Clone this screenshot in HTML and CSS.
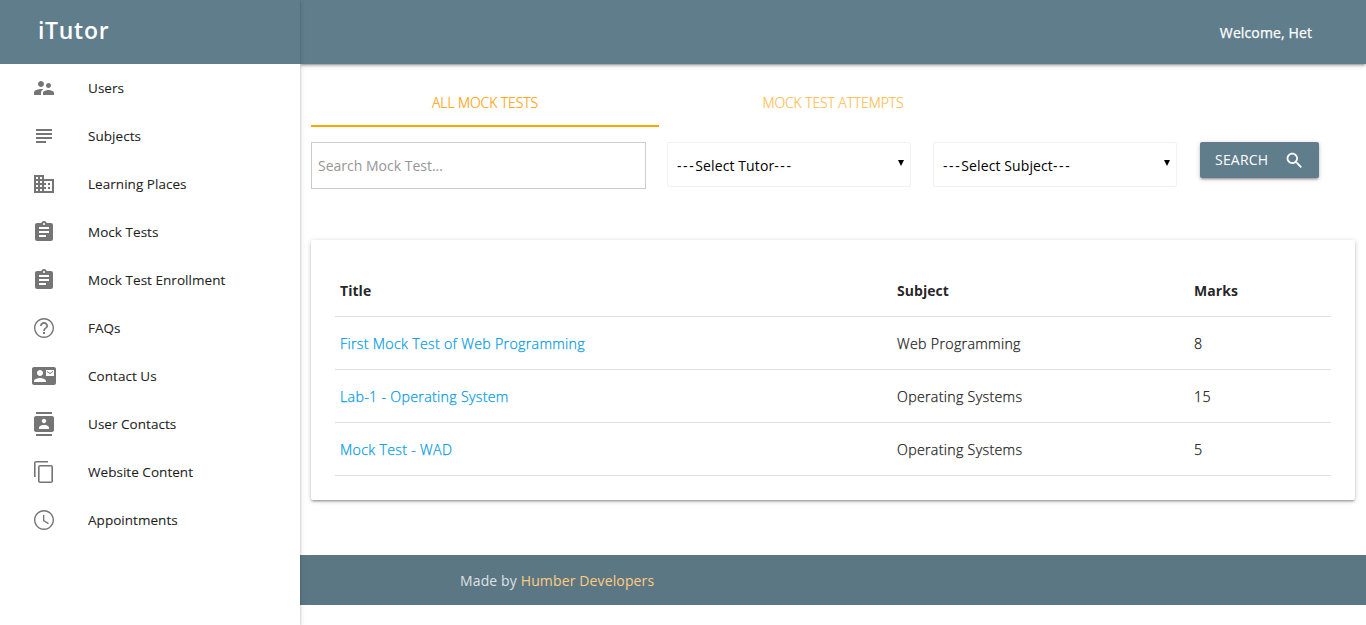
FILE: index.html
```html
<!DOCTYPE html>
<html lang="en">
<head>
<meta charset="utf-8">
<title>iTutor</title>
<link rel="stylesheet" href="styles.css">
</head>
<body>
<div class="app">
  <aside class="sidebar">
    <div class="brand"><span class="brand-name">iTutor</span></div>
    <nav class="menu">
      <a class="menu-item"><svg class="icon" viewBox="0 0 24 24"><path d="M16.5 12c1.38 0 2.49-1.12 2.49-2.5S17.880 7 16.500 7C15.120 7 14 8.120 14 9.500s1.120 2.500 2.500 2.500zM9 11c1.660 0 2.990-1.340 2.990-3S10.660 5 9 5C7.340 5 6 6.340 6 8s1.340 3 3 3zm7.500 3c-1.830 0-5.500.92-5.500 2.750V19h11v-2.250c0-1.830-3.670-2.750-5.500-2.750zM9 13c-2.330 0-7 1.170-7 3.500V19h7v-2.250c0-.85.33-2.340 2.370-3.470C10.500 13.100 9.660 13 9 13z"/></svg><span>Users</span></a>
      <a class="menu-item"><svg class="icon" viewBox="0 0 24 24"><path d="M14 17H4v2h10v-2zm6-8H4v2h16V9zM4 15h16v-2H4v2zM4 5v2h16V5H4z"/></svg><span>Subjects</span></a>
      <a class="menu-item"><svg class="icon" viewBox="0 0 24 24"><path d="M12 7V3H2v18h20V7H12zM6 19H4v-2h2v2zm0-4H4v-2h2v2zm0-4H4V9h2v2zm0-4H4V5h2v2zm4 12H8v-2h2v2zm0-4H8v-2h2v2zm0-4H8V9h2v2zm0-4H8V5h2v2zm10 12h-8v-2h2v-2h-2v-2h2v-2h-2V9h8v10zm-2-8h-2v2h2v-2zm0 4h-2v2h2v-2z"/></svg><span>Learning Places</span></a>
      <a class="menu-item"><svg class="icon" viewBox="0 0 24 24"><path d="M19 3h-4.180C14.400 1.840 13.300 1 12 1c-1.300 0-2.400.84-2.820 2H5c-1.100 0-2 .9-2 2v14c0 1.100.9 2 2 2h14c1.100 0 2-.9 2-2V5c0-1.100-.9-2-2-2zm-7 0c.55 0 1 .45 1 1s-.45 1-1 1-1-.45-1-1 .45-1 1-1zm2 14H7v-2h7v2zm3-4H7v-2h10v2zm0-4H7V7h10v2z"/></svg><span>Mock Tests</span></a>
      <a class="menu-item"><svg class="icon" viewBox="0 0 24 24"><path d="M19 3h-4.180C14.400 1.840 13.300 1 12 1c-1.300 0-2.400.84-2.820 2H5c-1.100 0-2 .9-2 2v14c0 1.100.9 2 2 2h14c1.100 0 2-.9 2-2V5c0-1.100-.9-2-2-2zm-7 0c.55 0 1 .45 1 1s-.45 1-1 1-1-.45-1-1 .45-1 1-1zm2 14H7v-2h7v2zm3-4H7v-2h10v2zm0-4H7V7h10v2z"/></svg><span>Mock Test Enrollment</span></a>
      <a class="menu-item"><svg class="icon" viewBox="0 0 24 24"><path d="M11 18h2v-2h-2v2zm1-16C6.480 2 2 6.480 2 12s4.480 10 10 10 10-4.480 10-10S17.520 2 12 2zm0 18.600c-4.750 0-8.600-3.850-8.600-8.600S7.250 3.400 12 3.400s8.600 3.850 8.600 8.600-3.850 8.600-8.600 8.600zM12 6c-2.210 0-4 1.790-4 4h1.700c0-1.270 1.030-2.300 2.300-2.300s2.300 1.030 2.300 2.300c0 2-3.150 1.750-3.150 5h1.700c0-2.250 3.150-2.500 3.150-5 0-2.210-1.790-4-4-4z"/></svg><span>FAQs</span></a>
      <a class="menu-item"><svg class="icon" viewBox="0 0 24 24"><path d="M21 8V7l-3 2-3-2v1l3 2 3-2zm1-5H2C.9 3 0 3.900 0 5v14c0 1.100.9 2 2 2h20c1.100 0 1.990-.9 1.990-2L24 5c0-1.100-.9-2-2-2zM8 6c1.660 0 3 1.340 3 3s-1.340 3-3 3-3-1.340-3-3 1.340-3 3-3zm6 12H2v-1c0-2 4-3.100 6-3.100s6 1.100 6 3.100v1zm8-6h-8V6h8v6z"/></svg><span>Contact Us</span></a>
      <a class="menu-item"><svg class="icon" viewBox="0 0 24 24"><path d="M20 0H4v2h16V0zM4 24h16v-2H4v2zM20 4H4c-1.100 0-2 .9-2 2v12c0 1.100.9 2 2 2h16c1.100 0 2-.9 2-2V6c0-1.100-.9-2-2-2zm-8 2.750c1.240 0 2.250 1.010 2.250 2.250s-1.010 2.250-2.250 2.250S9.750 10.240 9.750 9 10.760 6.750 12 6.750zM17 17H7v-1.500c0-1.670 3.330-2.500 5-2.500s5 .83 5 2.500V17z"/></svg><span>User Contacts</span></a>
      <a class="menu-item"><svg class="icon" viewBox="0 0 24 24"><path d="M16 1H4c-1.100 0-2 .9-2 2v14h1.600V2.600H16V1zm3 4H8c-1.100 0-2 .9-2 2v14c0 1.100.9 2 2 2h11c1.100 0 2-.9 2-2V7c0-1.100-.9-2-2-2zm.4 16.400H7.600V6.600h11.800v14.800z"/></svg><span>Website Content</span></a>
      <a class="menu-item"><svg class="icon" viewBox="0 0 24 24"><path d="M12 2C6.500 2 2 6.500 2 12s4.500 10 10 10 10-4.500 10-10S17.500 2 12 2zm0 18.600c-4.750 0-8.600-3.850-8.600-8.600S7.250 3.400 12 3.400s8.600 3.850 8.600 8.600-3.850 8.600-8.600 8.600zM12.300 7H11v6l5.200 3.200.7-1.200-4.600-2.700V7z"/></svg><span>Appointments</span></a>
    </nav>
  </aside>
  <div class="page">
    <header class="topbar"><span class="welcome">Welcome, Het</span></header>
    <main class="content">
      <div class="tabs">
        <a class="tab tab-active">ALL MOCK TESTS</a>
        <a class="tab">MOCK TEST ATTEMPTS</a>
      </div>
      <form class="filters">
        <input class="search-input" type="text" placeholder="Search Mock Test...">
        <div class="select"><span class="select-label"><span class="dashes">---</span>Select Tutor<span class="dashes">---</span></span><svg class="caret" viewBox="0 0 6 6"><path d="M0 0h6L3 6z"/></svg></div>
        <div class="select"><span class="select-label"><span class="dashes">---</span>Select Subject<span class="dashes">---</span></span><svg class="caret" viewBox="0 0 6 6"><path d="M0 0h6L3 6z"/></svg></div>
        <button class="btn" type="button"><span>SEARCH</span><svg class="btn-icon" viewBox="0 0 24 24"><path d="M15.500 14h-.79l-.28-.27C15.410 12.590 16 11.110 16 9.500 16 5.910 13.090 3 9.500 3S3 5.910 3 9.500 5.910 16 9.500 16c1.610 0 3.090-.59 4.230-1.570l.27.28v.79l5 4.990L20.490 19l-4.990-5zm-6 0C7.010 14 5 11.990 5 9.500S7.010 5 9.500 5 14 7.010 14 9.500 11.990 14 9.500 14z"/></svg></button>
      </form>
      <section class="card">
        <table class="tests">
          <colgroup><col class="col-title"><col class="col-subject"><col></colgroup>
          <thead><tr><th>Title</th><th>Subject</th><th>Marks</th></tr></thead>
          <tbody>
            <tr><td><a class="link">First Mock Test of Web Programming</a></td><td>Web Programming</td><td>8</td></tr>
            <tr><td><a class="link">Lab-1 - Operating System</a></td><td>Operating Systems</td><td>15</td></tr>
            <tr><td><a class="link">Mock Test - WAD</a></td><td>Operating Systems</td><td>5</td></tr>
          </tbody>
        </table>
      </section>
    </main>
    <footer class="footer"><span>Made by <a class="footer-link">Humber Developers</a></span></footer>
  </div>
</div>
</body>
</html>
```
FILE: styles.css
```css
* { box-sizing: border-box; }
body {
  margin: 0;
  background: #fff;
  color: rgba(0, 0, 0, 0.87);
  font: 400 14px/22px "Open Sans", "Noto Sans", sans-serif;
  overflow: hidden;
}
.app { display: flex; height: 625px; }

/* Sidebar */
.sidebar {
  position: relative;
  z-index: 2;
  flex: 0 0 300px;
  background: #fff;
  box-shadow: 0 2px 2px 0 rgba(0,0,0,.14), 0 3px 1px -2px rgba(0,0,0,.12), 0 1px 5px 0 rgba(0,0,0,.2);
}
.brand {
  display: flex;
  align-items: center;
  height: 64px;
  padding: 0 38px 5px;
  background: #607d8b;
  color: #fff;
}
.brand-name {
  font: 600 23px/30px "Open Sans", sans-serif;
  letter-spacing: 0.7px;
}
.menu-item {
  display: flex;
  align-items: center;
  gap: 32px;
  height: 48px;
  padding: 0 32px;
  font-size: 13.5px;
  letter-spacing: 0.04px;
  -webkit-text-stroke: 0.15px currentColor;
  white-space: nowrap;
}
.icon { width: 24px; height: 24px; fill: #757575; -webkit-text-stroke: 0; }

/* Main column */
.page { flex: 1; min-width: 0; }
.topbar {
  display: flex;
  align-items: center;
  justify-content: flex-end;
  height: 64px;
  padding: 1px 54px 0 0;
  background: #607d8b;
  color: #fff;
  box-shadow: 0 2px 2px 0 rgba(0,0,0,.14), 0 3px 1px -2px rgba(0,0,0,.12), 0 1px 5px 0 rgba(0,0,0,.2);
}
.welcome {
  font-size: 14px;
  letter-spacing: 0.12px;
  -webkit-text-stroke: 0.25px currentColor;
}
.content { height: 491px; padding: 15px 11px 0; }
.tabs { display: flex; height: 48px; }
.tab {
  width: 348px;
  height: 48px;
  font-size: 14px;
  font-weight: 300;
  line-height: 48px;
  text-align: center;
  letter-spacing: -0.1px;
  color: #ffbc4c;
  -webkit-text-stroke: 0.2px currentColor;
}
.tab-active { color: #ffa000; border-bottom: 2px solid #ffa500; }

/* Filters */
.filters { display: flex; align-items: flex-start; padding-top: 15px; height: 113px; }
.search-input {
  width: 335px;
  height: 47px;
  margin-right: 21px;
  padding: 0 6px;
  border: 1px solid #ccc;
  font: 400 14px "Open Sans", sans-serif;
}
.search-input::placeholder { color: #969696; opacity: 1; }
.select {
  display: flex;
  align-items: center;
  justify-content: space-between;
  width: 244px;
  height: 45px;
  margin-right: 22px;
  padding: 2px 6px 0 9px;
  border: 1px solid #f2f2f2;
  border-radius: 2px;
  color: #000;
  letter-spacing: 0.1px;
}
.dashes { letter-spacing: 1.6px; }
.caret { width: 6px; height: 6px; margin-top: -5px; }
.btn {
  display: flex;
  align-items: center;
  justify-content: space-between;
  width: 119px;
  height: 36px;
  margin-left: 1px;
  padding: 0 14px 0 15px;
  border: 0;
  border-radius: 2px;
  background: #607d8b;
  color: #fff;
  font: 400 14px/36px "Open Sans", sans-serif;
  letter-spacing: 0.2px;
  box-shadow: 0 2px 2px 0 rgba(0,0,0,.14), 0 3px 1px -2px rgba(0,0,0,.12), 0 1px 5px 0 rgba(0,0,0,.2);
}
.btn-icon { width: 21px; height: 21px; fill: #fff; }

/* Results card */
.card {
  height: 260px;
  padding: 24px;
  border-radius: 2px;
  background: #fff;
  box-shadow: 0 2px 2px 0 rgba(0,0,0,.14), 0 3px 1px -2px rgba(0,0,0,.12), 0 1px 5px 0 rgba(0,0,0,.2);
}
.tests { width: 100%; border-spacing: 0; table-layout: fixed; }
.col-title { width: 557px; }
.col-subject { width: 297px; }
.tests th, .tests td {
  height: 53px;
  padding: 1px 5px 0;
  border-bottom: 1px solid #e0e0e0;
  text-align: left;
}
.tests th { font-weight: 700; letter-spacing: 0.05px; }
.tests td {
  font-size: 14.2px;
  font-weight: 300;
  letter-spacing: 0.31px;
  color: #212121;
  -webkit-text-stroke: 0.25px currentColor;
}
.tests .link { color: #039be5; }

/* Footer */
.footer {
  display: flex;
  align-items: center;
  height: 50px;
  padding: 2px 0 0 160px;
  background: #5c7784;
  color: rgba(255, 255, 255, 0.8);
  letter-spacing: 0.13px;
}
.footer-link { color: #ffcc80; }
```
